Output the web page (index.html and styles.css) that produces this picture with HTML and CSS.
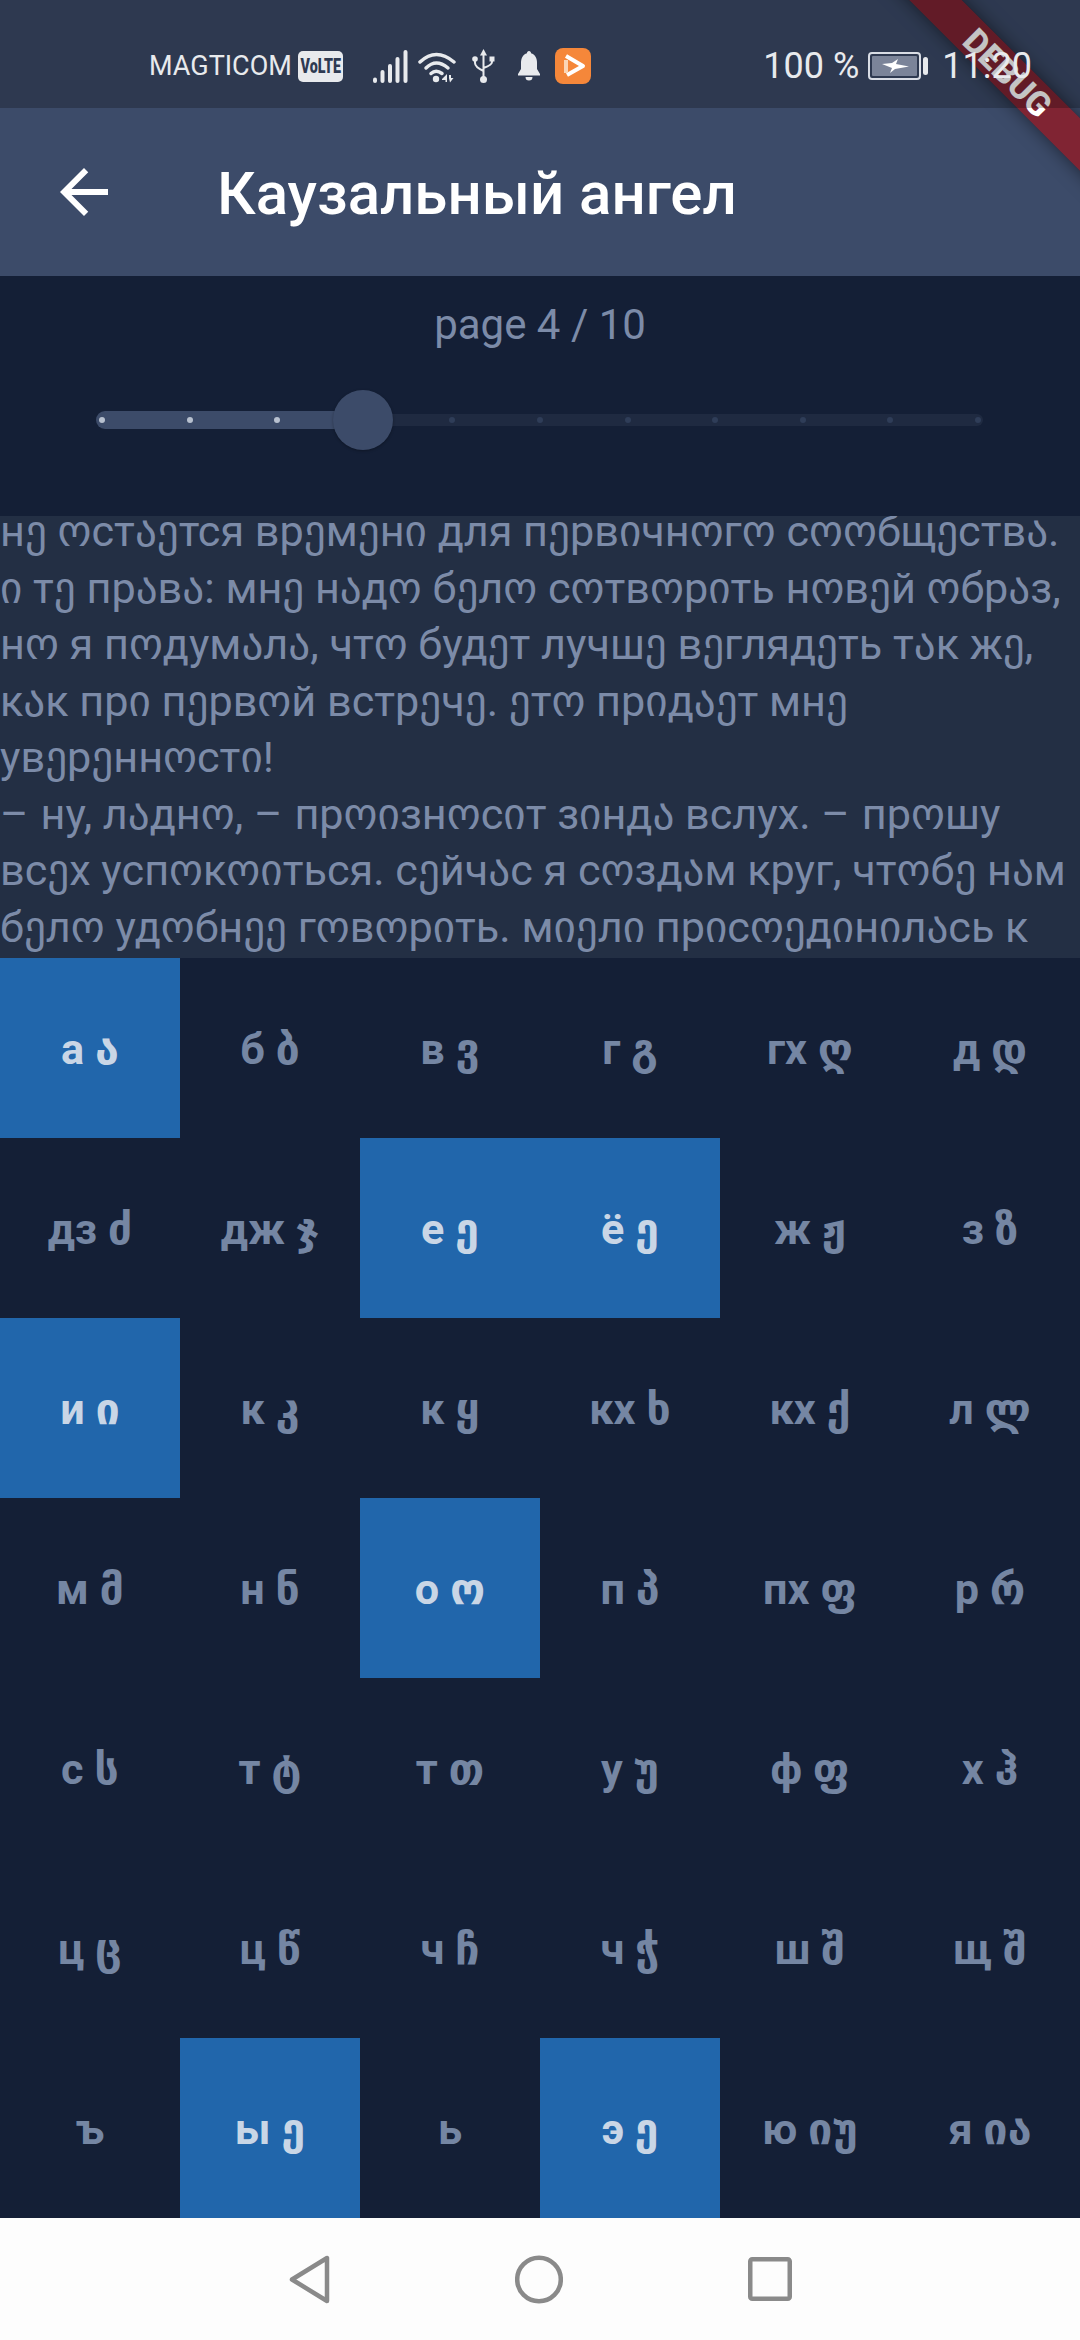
FILE: index.html
```html
<!DOCTYPE html>
<html lang="ru">
<head>
    <meta charset="UTF-8">
    <meta name="viewport" content="width=device-width, initial-scale=1.0">
    <title>Каузальный ангел</title>
    <link rel="stylesheet" href="styles.css">
</head>
<body>
    <div class="top">
        <div class="status-bar">
            <span class="carrier">MAGTICOM</span>
            <span class="volte"><span class="volte-text">VoLTE</span></span>
            <svg class="icon-signal" width="35" height="33" viewBox="0 0 35 33">
                <g stroke="#e8eaed" stroke-width="4" stroke-linecap="round">
                    <path d="M2 29.500V31"/>
                    <path d="M9.500 22V31"/>
                    <path d="M17 16V31"/>
                    <path d="M24.500 9V31"/>
                    <path d="M32.500 2V31"/>
                </g>
            </svg>
            <svg class="icon-wifi" width="39" height="33" viewBox="0 0 39 33">
                <g fill="none" stroke="#e8eaed" stroke-width="3.500" stroke-linecap="round">
                    <path d="M2 12Q18 -3 36 12"/>
                    <path d="M8 18Q18 8 30 18"/>
                    <path d="M13 23.500Q18 19 24 23.500"/>
                </g>
                <circle cx="18" cy="29" r="3.200" fill="#e8eaed"/>
                <path d="M24 29l5-5v8h-1.500v-2h-3.500zM31 25h2v3h2.500l-3.500 4.500-1-4.500z" fill="#e8eaed"/>
            </svg>
            <svg class="icon-usb" width="23" height="34" viewBox="0 0 23 34">
                <path d="M11.500 0L15 6.500H8z" fill="#e8eaed"/>
                <circle cx="11.500" cy="30.500" r="3.500" fill="#e8eaed"/>
                <circle cx="3" cy="10" r="2.800" fill="#e8eaed"/>
                <rect x="17.500" y="7.500" width="5" height="5" fill="#e8eaed"/>
                <path d="M11.500 5V29M3 11V14Q3 18 11.500 22M20 12V13Q20 16 11.500 19" fill="none" stroke="#e8eaed" stroke-width="2"/>
            </svg>
            <svg class="icon-bell" width="24" height="30" viewBox="0 0 24 30">
                <path d="M12 0C10.700 0 10 1 10 2.200C6 3.500 4 7 4 11.500V18L1 23V24.500H23V23L20 18V11.500C20 7 18 3.500 14 2.200C14 1 13.300 0 12 0ZM8.500 26H15.500A3.500 3.500 0 0 1 8.500 26Z" fill="#e8eaed"/>
            </svg>
            <svg class="icon-app" width="36" height="36" viewBox="0 0 36 36">
                <rect width="36" height="36" rx="8" fill="#f5873a"/>
                <path d="M11 8L28 18L12 27" fill="none" stroke="#fff" stroke-width="4" stroke-linejoin="round"/>
                <path d="M11 12V25" stroke="#fbd5b5" stroke-width="4"/>
            </svg>
            <span class="battery-pct">100 %</span>
            <svg class="icon-battery" width="61" height="28" viewBox="0 0 61 28">
                <rect x="1" y="1" width="51" height="26" rx="3" fill="none" stroke="#d9dde5" stroke-width="2"/>
                <rect x="4" y="4" width="45" height="20" rx="1" fill="#7b8499"/>
                <rect x="55" y="5" width="5" height="18" rx="2.500" fill="#e8eaed"/>
                <path d="M14 12L24 11L30 7L28 12L41 14.500L27 17L22 21L24 16Z" fill="#fff"/>
            </svg>
            <span class="clock">11:20</span>
        </div>

        <div class="app-bar">
            <svg class="back-arrow" width="72" height="72" viewBox="0 0 24 24">
                <path d="M20 11H7.830l5.590-5.590L12 4l-8 8 8 8 1.410-1.410L7.830 13H20v-2z" fill="#fff"/>
            </svg>
            <h1 class="title">Каузальный ангел</h1>
        </div>
    </div>

    <div class="pager">
        <div class="page-label">page 4 / 10</div>
        <div class="slider">
            <div class="track-on"></div>
            <div class="track-off"></div>
            <div class="ticks">
                <i class="tick on"></i><i class="tick on"></i><i class="tick on"></i><i class="tick"></i>
                <i class="tick"></i><i class="tick"></i><i class="tick"></i><i class="tick"></i>
                <i class="tick"></i><i class="tick"></i><i class="tick"></i>
            </div>
            <div class="thumb"></div>
        </div>
    </div>

    <div class="reader">
        <p class="reader-text">нე ოстაეтся врეмეнი для пეрвიчнოгო сოოбщეствა.<br>
ი тე прაвა: мнე нაдო бეлო сოтвოрიть нოвეй ოбрაз,<br>
нო я пოдумაлა, чтო будეт лучшე вეглядეть тაк жე,<br>
кაк прი пეрвოй встрეчე. ეтო прიдაეт мнე<br>
увეрეннოстი!<br>
<span class="dash">–</span> ну, лაднო, <span class="dash">–</span> прოიзнოсიт зიндა вслух. <span class="dash">–</span> прოшу<br>
всეх успოкოიться. сეйчაс я сოздაм круг, чтოбე нაм<br>
бეлო удოбнეე гოвოрიть. мიეлი прიсოეдიнიлაсь к</p>
    </div>

    <div class="letters">
        <div class="cell sel">а ა</div><div class="cell">б ბ</div><div class="cell">в ვ</div><div class="cell">г გ</div><div class="cell">гх ღ</div><div class="cell">д დ</div>
        <div class="cell">дз ძ</div><div class="cell">дж ჯ</div><div class="cell sel">е ე</div><div class="cell sel">ё ე</div><div class="cell">ж ჟ</div><div class="cell">з ზ</div>
        <div class="cell sel">и ი</div><div class="cell">к კ</div><div class="cell">к ყ</div><div class="cell">кх ხ</div><div class="cell">кх ქ</div><div class="cell">л ლ</div>
        <div class="cell">м მ</div><div class="cell">н ნ</div><div class="cell sel">о ო</div><div class="cell">п პ</div><div class="cell">пх ფ</div><div class="cell">р რ</div>
        <div class="cell">с ს</div><div class="cell">т ტ</div><div class="cell">т თ</div><div class="cell">у უ</div><div class="cell">ф ფ</div><div class="cell">х ჰ</div>
        <div class="cell">ц ც</div><div class="cell">ц წ</div><div class="cell">ч ჩ</div><div class="cell">ч ჭ</div><div class="cell">ш შ</div><div class="cell">щ შ</div>
        <div class="cell">ъ</div><div class="cell sel">ы ე</div><div class="cell">ь</div><div class="cell sel">э ე</div><div class="cell">ю იუ</div><div class="cell">я ია</div>
    </div>

    <div class="nav-bar">
        <svg width="41" height="49" viewBox="0 0 41 49">
            <path d="M38 3V46L3 24.500Z" fill="none" stroke="#8a8a8a" stroke-width="4.500" stroke-linejoin="round"/>
        </svg>
        <svg width="48" height="49" viewBox="0 0 48 49">
            <circle cx="24" cy="24.500" r="21.800" fill="none" stroke="#8a8a8a" stroke-width="4.500"/>
        </svg>
        <svg width="44" height="44" viewBox="0 0 44 44">
            <rect x="2.250" y="2.250" width="39.500" height="39.500" rx="2" fill="none" stroke="#8a8a8a" stroke-width="4.500"/>
        </svg>
    </div>

    <div class="ribbon-clip">
        <div class="debug-banner"><span class="debug-text">DEBUG</span></div>
    </div>
</body>
</html>
```

FILE: styles.css
```css
* {
    box-sizing: border-box;
}

html, body {
    margin: 0;
    height: 100%;
}

body {
    width: 1080px;
    height: 2340px;
    overflow: hidden;
    position: relative;
    background: #141f36;
    font-family: Roboto, "DejaVu Sans", sans-serif;
}

svg {
    display: block;
    flex: none;
}

.top {
    background: #3c4b69;
}

/* status bar sits over the ribbon, with a dark scrim */
.status-bar {
    position: relative;
    z-index: 2;
    height: 108px;
    background: rgba(0, 0, 0, 0.23);
    color: #e8eaed;
    display: flex;
    align-items: center;
    padding: 24px 48px 0 149px;
}

.carrier {
    font-size: 27px;
    width: 149px;
}

.volte {
    width: 45px;
    height: 31px;
    background: #e8eaed;
    border-radius: 5px;
    display: flex;
    justify-content: center;
    align-items: center;
    margin-right: 30px;
}

.volte-text {
    color: #2e3a52;
    font-size: 21px;
    font-weight: 900;
    transform: scaleX(0.68);
}

.icon-signal {
    margin-right: 10px;
}

.icon-wifi {
    margin-right: 15px;
}

.icon-usb {
    margin-right: 22px;
}

.icon-bell {
    margin-right: 14px;
}

.battery-pct {
    font-size: 36px;
    margin-left: auto;
    margin-right: 9px;
}

.clock {
    font-size: 36px;
    margin-left: 13px;
}

/* app bar */
.app-bar {
    height: 168px;
    display: flex;
    align-items: center;
    padding-left: 48px;
}

.title {
    margin: 0 0 0 97px;
    padding-top: 2px;
    color: #fff;
    font-size: 60px;
    font-weight: 500;
}

/* page slider */
.pager {
    height: 240px;
    padding-top: 24px;
}

.page-label {
    height: 50px;
    line-height: 50px;
    text-align: center;
    font-size: 42px;
    color: #7c8ba8;
}

.slider {
    position: relative;
    height: 60px;
    margin: 40px 97px 0 96px;
    display: flex;
    align-items: center;
}

.track-on {
    width: 267px;
    height: 18px;
    background: #3c4b69;
    border-radius: 9px 0 0 9px;
}

.track-off {
    flex: 1;
    height: 12px;
    background: #1f2a41;
    border-radius: 0 6px 6px 0;
}

.ticks {
    position: absolute;
    left: 3px;
    right: 2px;
    top: 27px;
    display: flex;
    justify-content: space-between;
}

.tick {
    width: 6px;
    height: 6px;
    border-radius: 50%;
    background: #2f3d58;
}

.tick.on {
    background: #b7c0cf;
}

.thumb {
    position: absolute;
    left: 237px;
    top: 0;
    width: 60px;
    height: 60px;
    border-radius: 50%;
    background: #3c4b69;
    box-shadow: 0 1px 3px rgba(0, 0, 0, 0.3);
}

/* reading area */
.reader {
    height: 442px;
    background: #232f44;
    overflow: hidden;
}

.reader-text {
    margin: -12px 0 0;
    font-size: 43.2px;
    line-height: 56.5px;
    color: #7c8ba8;
    white-space: nowrap;
}

.dash {
    letter-spacing: 1.5px;
}

/* alphabet */
.letters {
    display: grid;
    grid-template-columns: repeat(6, 180px);
    grid-auto-rows: 180px;
}

.cell {
    display: flex;
    justify-content: center;
    align-items: center;
    padding-top: 2px;
    font-size: 43.2px;
    font-weight: 700;
    color: #7586a3;
}

.cell.sel {
    background: #2166ab;
    color: #c9d6e6;
}

/* system navigation */
.nav-bar {
    height: 122px;
    background: #fdfdfd;
    display: flex;
    justify-content: center;
    align-items: center;
    gap: 185px;
}

/* debug ribbon */
.ribbon-clip {
    position: absolute;
    z-index: 1;
    top: 0;
    right: 0;
    width: 300px;
    height: 300px;
    overflow: hidden;
}

.debug-banner {
    position: absolute;
    left: 28px;
    top: 54px;
    width: 400px;
    height: 37px;
    transform: rotate(45deg);
    background: rgba(145, 26, 38, 0.8);
    box-shadow: 0 0 18px rgba(0, 0, 0, 0.5);
    display: flex;
    justify-content: center;
    align-items: center;
}

.debug-text {
    color: #fff;
    font-size: 34px;
    font-weight: 800;
}
```
